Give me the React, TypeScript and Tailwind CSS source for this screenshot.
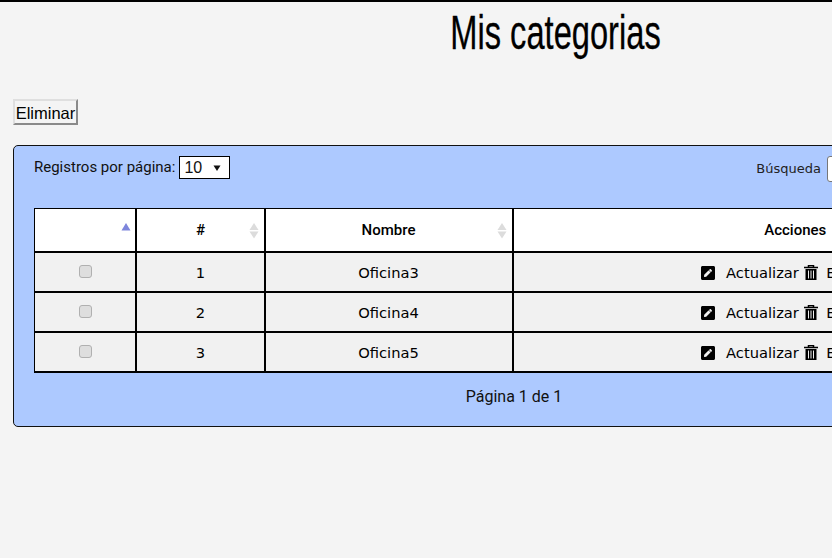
import { FaPenSquare } from 'react-icons/fa';

const ROWS = [
  { id: 1, name: 'Oficina3' },
  { id: 2, name: 'Oficina4' },
  { id: 3, name: 'Oficina5' },
];

function SortArrows() {
  return (
    <svg className="absolute right-[5px] top-[14px]" width="10" height="16" viewBox="0 0 10 16">
      <path d="M5 0 L9.5 7 H0.5 Z" fill="#dcdcdc" />
      <path d="M5 15.5 L9.5 8.5 H0.5 Z" fill="#dcdcdc" />
    </svg>
  );
}

function TrashIcon() {
  return (
    <svg width="14" height="15" viewBox="0 0 14 15" className="inline-block align-[-2px]">
      <path d="M4.5 2 V0.5 H9.5 V2 M0 2.5 H14" fill="none" stroke="#000" strokeWidth="1.5" />
      <path d="M1.5 4 H12.5 V15 H1.5 Z" fill="#000" />
      <path d="M4.5 5.5 V13.5 M7 5.5 V13.5 M9.5 5.5 V13.5" stroke="#f1f1f1" strokeWidth="1" />
    </svg>
  );
}

function Row({ id, name }: { id: number; name: string }) {
  return (
    <tr className="h-10 bg-[#f1f1f1]">
      <td className="border-2 border-l border-black text-center align-top pt-[9px] pl-[1px]">
        <span className="inline-block w-[13px] h-[13px] rounded-[3px] border border-[#b0b0b0] bg-[#dedede]" />
      </td>
      <td className="border-2 border-black text-center pt-[4px] pl-[1px]">{id}</td>
      <td className="border-2 border-black text-center pt-[4px]">{name}</td>
      <td className="border-2 border-r-0 border-black text-center whitespace-nowrap pt-[4px] pr-[4px]">
        <FaPenSquare className="inline-block w-[16px] h-[16px] mr-[10px] align-[-3px]" />
        Actualizar <TrashIcon /> <span className="ml-[4px]">Eliminar</span>
      </td>
    </tr>
  );
}

export default function App() {
  return (
    <div className="w-[832px] h-[558px] overflow-hidden bg-[#f4f4f4] border-t-2 border-black relative">
      <div className="w-[1111px]">
        <h1 className="text-center text-[48px] leading-[62px] text-black scale-x-[0.68] [-webkit-text-stroke:0.3px_black] font-['Liberation_Sans',sans-serif]">
          Mis categorias
        </h1>

        <div className="pl-[13px] pt-[35px]">
          <button className="h-[26px] w-[65px] pt-[2px] bg-[#f4f4f4] border-2 border-t-[#dfdfdf] border-l-[#dfdfdf] border-r-[#8a8a8a] border-b-[#8a8a8a] text-[16.5px] leading-none text-black font-['Liberation_Sans',sans-serif] whitespace-nowrap">
            Eliminar
          </button>
        </div>

        <div className="ml-[13px] mt-[20px] w-[1085px] h-[282px] bg-[#adc9ff] border border-[#111] rounded-[5px] px-5 pt-[10px]">
          <div className="flex items-start justify-between h-[24px]">
            <div className="flex items-center gap-1 text-[15px] text-[#111] font-['Roboto',sans-serif]">
              <span>Registros por página:</span>
              <span className="flex items-center justify-between w-[51px] h-[23px] bg-white border border-black pl-1 pr-2 text-[16px] font-['Liberation_Sans',sans-serif]">
                10
                <svg width="8" height="8" viewBox="0 0 8 8">
                  <path d="M0.5 1.5 H7.5 L4 7 Z" fill="#111" />
                </svg>
              </span>
            </div>
            <div className="flex items-center gap-[6px] mr-[80px] text-[13px] text-[#222] font-['DejaVu_Sans',sans-serif]">
              <span>Búsqueda</span>
              <span className="block w-[170px] h-[26px] bg-white border border-[#777] rounded-[3px]" />
            </div>
          </div>

          <table className="mt-[28px] w-[1043px] table-fixed border-collapse text-[14.7px] text-black font-['DejaVu_Sans',sans-serif]">
            <colgroup>
              <col className="w-[101px]" />
              <col className="w-[129px]" />
              <col className="w-[248px]" />
              <col />
            </colgroup>
            <thead>
              <tr className="h-[43px] bg-white font-['Roboto',sans-serif] text-[15px]">
                <th className="relative border border-b-2 border-r-2 border-black font-medium">
                  <svg className="absolute right-[4px] top-[14px]" width="10" height="8" viewBox="0 0 10 8">
                    <path d="M5 0 L9.5 7.5 H0.5 Z" fill="#7e86dc" />
                  </svg>
                </th>
                <th className="relative border-2 border-t border-black font-medium pl-[1px]">
                  #
                  <SortArrows />
                </th>
                <th className="relative border-2 border-t border-black font-medium">
                  Nombre
                  <SortArrows />
                </th>
                <th className="border-2 border-t border-r-0 border-black font-medium">Acciones</th>
              </tr>
            </thead>
            <tbody>
              {ROWS.map((row) => (
                <Row key={row.id} id={row.id} name={row.name} />
              ))}
            </tbody>
          </table>

          <div className="w-[960px] mt-[12px] text-center text-[16px] leading-[24px] text-[#111] font-['Roboto',sans-serif]">
            Página 1 de 1
          </div>
        </div>
      </div>
    </div>
  );
}
